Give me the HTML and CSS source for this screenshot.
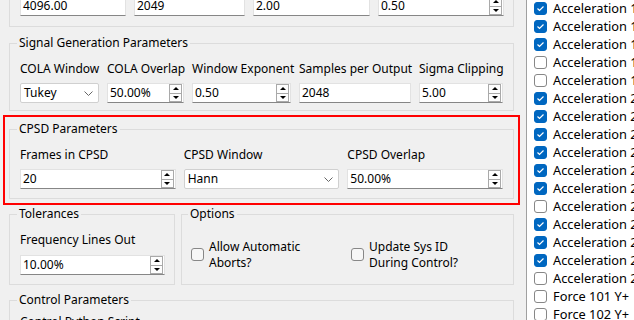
FILE: index.html
```html
<!DOCTYPE html>
<html lang="en">
  <head>
    <meta charset="UTF-8" />
    <title>Control Parameters</title>
    <link rel="stylesheet" href="styles.css">
  </head>
  <body>
    <div class="window">
      <div class="form">
        <div class="group group--cut">
          <div class="grid grid--top">
            <div class="field">4096.00</div>
            <div class="field">2049</div>
            <div class="field">2.00</div>
            <div class="field spin">0.50<span class="spin__btns"><i class="up"></i><i class="down"></i></span></div>
          </div>
        </div>

        <fieldset class="group group--signal">
          <legend>Signal Generation Parameters</legend>
          <div class="grid grid--signal">
            <span class="label">COLA Window</span>
            <span class="label">COLA Overlap</span>
            <span class="label">Window Exponent</span>
            <span class="label">Samples per Output</span>
            <span class="label">Sigma Clipping</span>
            <div class="field combo">Tukey<svg class="chevron" width="9" height="5" viewBox="0 0 9 5"><polyline points="0.5,0.5 4.5,4.5 8.5,0.5" /></svg></div>
            <div class="field spin">50.00%<span class="spin__btns"><i class="up"></i><i class="down"></i></span></div>
            <div class="field spin">0.50<span class="spin__btns"><i class="up"></i><i class="down"></i></span></div>
            <div class="field">2048</div>
            <div class="field spin">5.00<span class="spin__btns"><i class="up"></i><i class="down"></i></span></div>
          </div>
        </fieldset>

        <fieldset class="group group--cpsd">
          <legend>CPSD Parameters</legend>
          <div class="grid grid--cpsd">
            <span class="label">Frames in CPSD</span>
            <span class="label">CPSD Window</span>
            <span class="label">CPSD Overlap</span>
            <div class="field spin">20<span class="spin__btns"><i class="up"></i><i class="down"></i></span></div>
            <div class="field combo">Hann<svg class="chevron" width="9" height="5" viewBox="0 0 9 5"><polyline points="0.5,0.5 4.5,4.5 8.5,0.5" /></svg></div>
            <div class="field spin">50.00%<span class="spin__btns"><i class="up"></i><i class="down"></i></span></div>
          </div>
        </fieldset>

        <div class="split">
          <fieldset class="group group--tol">
            <legend>Tolerances</legend>
            <div class="grid grid--tol">
              <span class="label">Frequency Lines Out</span>
              <div class="field spin">10.00%<span class="spin__btns"><i class="up"></i><i class="down"></i></span></div>
            </div>
          </fieldset>
          <fieldset class="group group--options">
            <legend>Options</legend>
            <div class="options">
              <label class="option"><span class="box"></span><span>Allow Automatic<br>Aborts?</span></label>
              <label class="option"><span class="box"></span><span>Update Sys ID<br>During Control?</span></label>
            </div>
          </fieldset>
        </div>

        <fieldset class="group group--control">
          <legend>Control Parameters</legend>
          <span class="label">Control Python Script</span>
        </fieldset>
      </div>

      <ul class="channels">
        <li class="checked"><span class="box"></span>Acceleration 101 X+</li>
        <li class="checked"><span class="box"></span>Acceleration 101 Y+</li>
        <li class="checked"><span class="box"></span>Acceleration 101 Z+</li>
        <li><span class="box"></span>Acceleration 102 X+</li>
        <li><span class="box"></span>Acceleration 102 Y+</li>
        <li class="checked"><span class="box"></span>Acceleration 201 X+</li>
        <li class="checked"><span class="box"></span>Acceleration 201 Y+</li>
        <li class="checked"><span class="box"></span>Acceleration 201 Z+</li>
        <li class="checked"><span class="box"></span>Acceleration 202 X+</li>
        <li class="checked"><span class="box"></span>Acceleration 202 Y+</li>
        <li class="checked"><span class="box"></span>Acceleration 202 Z+</li>
        <li><span class="box"></span>Acceleration 203 X+</li>
        <li class="checked"><span class="box"></span>Acceleration 203 Y+</li>
        <li class="checked"><span class="box"></span>Acceleration 203 Z+</li>
        <li class="checked"><span class="box"></span>Acceleration 204 X+</li>
        <li><span class="box"></span>Acceleration 204 Y+</li>
        <li><span class="box"></span>Force 101 Y+</li>
        <li><span class="box"></span>Force 102 Y+</li>
      </ul>
    </div>
  </body>
</html>
```

FILE: styles.css
```css
body {
  margin: 0;
  background-color: #f0f0f0;
  color: #000;
  font: 12px/16px "Noto Sans", "Segoe UI", sans-serif;
  overflow: hidden;
}

.window {
  display: flex;
  height: 320px;
}

.form {
  box-sizing: border-box;
  flex: none;
  padding-left: 9px;
  width: 526px;
}

/* group boxes */
.group {
  border: 1px solid #dcdcdc;
  box-sizing: border-box;
  margin: 0;
  min-width: 0;
  padding: 10px 10px 7px;
  width: 505px;
}

.group legend {
  line-height: 16px;
  margin-left: -3px;
  padding: 0 2px;
}

.group--cut {
  border-top: none;
  margin-top: -4px;
  padding: 0 10px 10px;
}

.group--signal {
  margin-top: 8px;
}

.group--cpsd {
  margin-top: 10px;
  outline: 2px solid #f00;
  outline-offset: 4px;
  padding-bottom: 9px;
}

.split {
  display: flex;
  gap: 6px;
  margin-top: 7px;
  width: 505px;
}

.group--tol {
  padding: 10px 9px 9px 10px;
  width: 166px;
}

.group--options {
  flex: 1;
  padding: 0 9px;
  width: auto;
}

.group--control {
  margin-top: 7px;
  padding-top: 6px;
}

/* form grids */
.grid {
  display: grid;
  column-gap: 8px;
  row-gap: 6px;
}

.grid--top {
  grid-template-columns: 106px 111px 117px 126px;
}

.grid--signal {
  grid-template-columns: 79px 77px 99px 112px 84px;
}

.grid--cpsd {
  grid-template-columns: 1fr 1fr 1fr;
}

.grid--tol {
  grid-template-columns: 1fr;
  row-gap: 7px;
}

.label {
  display: block;
  white-space: nowrap;
}

/* inputs */
.field {
  align-items: center;
  background-color: #fff;
  border: 1px solid #e2e2e2;
  border-bottom-color: #868686;
  box-sizing: border-box;
  display: flex;
  height: 20px;
  padding-left: 2px;
  white-space: nowrap;
}

.combo {
  border-color: #d0d0d0;
  border-radius: 2px;
  justify-content: space-between;
  padding: 0 5px 0 3px;
}

.chevron polyline {
  fill: none;
  stroke: #666;
  stroke-width: 1;
}

.spin {
  justify-content: space-between;
  padding-right: 1px;
}

.spin__btns {
  border: 1px solid #a9a9a9;
  box-sizing: border-box;
  display: flex;
  flex-direction: column;
  height: 18px;
  width: 13px;
}

.spin__btns i {
  align-items: center;
  background-color: #fdfdfd;
  display: flex;
  flex: 1;
  justify-content: center;
}

.spin__btns i + i {
  border-top: 1px solid #a9a9a9;
}

.spin__btns i::before {
  border-left: 3px solid transparent;
  border-right: 3px solid transparent;
  content: "";
}

.spin__btns .up::before {
  border-bottom: 3px solid #000;
}

.spin__btns .down::before {
  border-top: 3px solid #000;
}

/* checkboxes */
.box {
  background-color: #fff;
  border: 1px solid #878787;
  border-radius: 3px;
  box-sizing: border-box;
  flex: none;
  height: 13px;
  width: 13px;
}

.options {
  display: grid;
  grid-template-columns: 160px auto;
  padding-top: 17px;
}

.option {
  align-items: center;
  display: flex;
  gap: 5px;
}

.option .box {
  background-color: #f7f7f7;
  margin-top: -2px;
}

/* channel list */
.channels {
  background-color: #fff;
  border-left: 1px solid #a0a0a0;
  flex: 1;
  font-size: 12.8px;
  list-style: none;
  margin: 0;
  overflow: hidden;
  padding: 0 0 0 7px;
}

.channels li {
  align-items: center;
  display: flex;
  gap: 6px;
  height: 18px;
  white-space: nowrap;
}

.channels li:first-child {
  margin-top: -1px;
}

.channels .checked .box {
  background: #0067c0 url("data:image/svg+xml,%3Csvg xmlns='http://www.w3.org/2000/svg' width='13' height='13'%3E%3Cpolyline points='3.5,6.5 5.5,8.5 9.5,4.5' fill='none' stroke='%23fff' stroke-width='1.2'/%3E%3C/svg%3E") center no-repeat;
  border-color: #0067c0;
}
```
